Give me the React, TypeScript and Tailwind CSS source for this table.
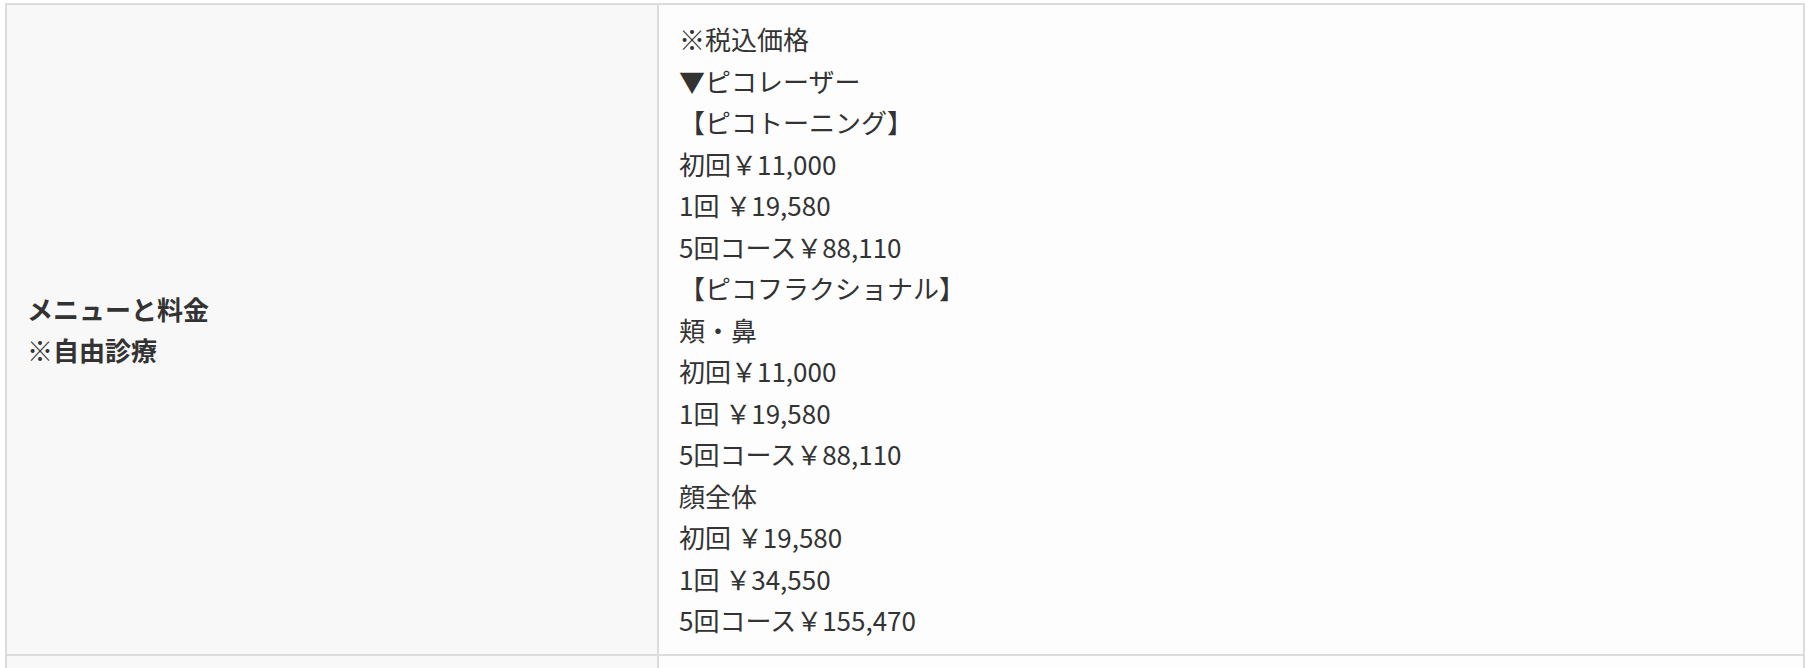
import React from "react";

const lines = [
  "※税込価格",
  "▼ピコレーザー",
  "【ピコトーニング】",
  "初回￥11,000",
  "1回 ￥19,580",
  "5回コース￥88,110",
  "【ピコフラクショナル】",
  "頬・鼻",
  "初回￥11,000",
  "1回 ￥19,580",
  "5回コース￥88,110",
  "顔全体",
  "初回 ￥19,580",
  "1回 ￥34,550",
  "5回コース￥155,470",
];

export default function App() {
  return (
    <div
      className="bg-white w-[1814px] h-[668px] overflow-hidden pl-[5px] pt-[3px] text-[#333]"
      style={{ fontFamily: '"Noto Sans CJK JP", "Noto Sans", sans-serif' }}
    >
      <div className="w-[1800px] border-2 border-b-0 border-[#dcdcdc]">
        <div className="flex border-b-2 border-[#dcdcdc]">
          <div className="w-[650px] shrink-0 bg-[#f8f8f8] flex items-center pl-[20px] text-[26px] leading-[40.5px] font-bold">
            <div>
              <div>メニューと料金</div>
              <div>※自由診療</div>
            </div>
          </div>
          <div className="flex-1 border-l-2 border-[#dcdcdc] bg-[#fdfdfd] pl-[20px] pt-[13px] pb-[13.5px] text-[26px] leading-[41.5px]">
            {lines.map((l, i) => (
              <div key={i}>{l}</div>
            ))}
          </div>
        </div>
        <div className="flex h-[60px]">
          <div className="w-[650px] shrink-0 bg-[#f8f8f8]" />
          <div className="flex-1 border-l-2 border-[#dcdcdc] bg-[#fdfdfd]" />
        </div>
      </div>
    </div>
  );
}
